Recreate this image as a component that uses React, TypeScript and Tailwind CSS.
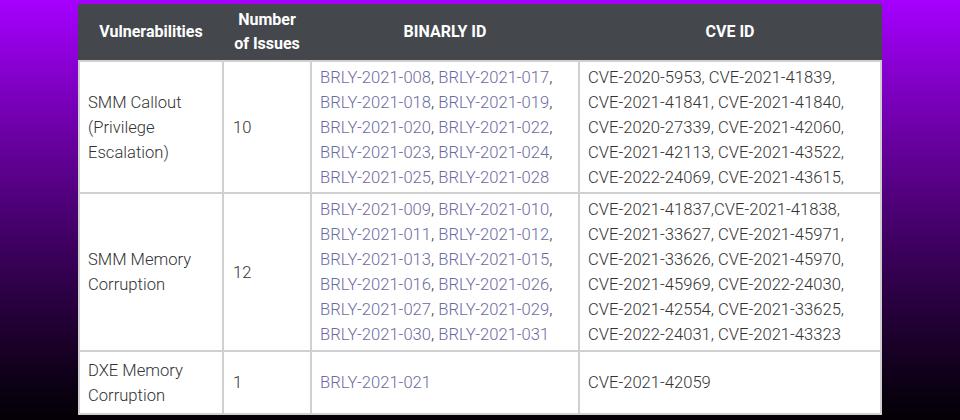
import React from 'react';

type Row = {
  name: string[];
  count: string;
  binarly: string[][];
  cve: string[];
};

const rows: Row[] = [
  {
    name: ['SMM Callout', '(Privilege', 'Escalation)'],
    count: '10',
    binarly: [
      ['BRLY-2021-008', 'BRLY-2021-017'],
      ['BRLY-2021-018', 'BRLY-2021-019'],
      ['BRLY-2021-020', 'BRLY-2021-022'],
      ['BRLY-2021-023', 'BRLY-2021-024'],
      ['BRLY-2021-025', 'BRLY-2021-028'],
    ],
    cve: [
      'CVE-2020-5953, CVE-2021-41839,',
      'CVE-2021-41841, CVE-2021-41840,',
      'CVE-2020-27339, CVE-2021-42060,',
      'CVE-2021-42113, CVE-2021-43522,',
      'CVE-2022-24069, CVE-2021-43615,',
    ],
  },
  {
    name: ['SMM Memory', 'Corruption'],
    count: '12',
    binarly: [
      ['BRLY-2021-009', 'BRLY-2021-010'],
      ['BRLY-2021-011', 'BRLY-2021-012'],
      ['BRLY-2021-013', 'BRLY-2021-015'],
      ['BRLY-2021-016', 'BRLY-2021-026'],
      ['BRLY-2021-027', 'BRLY-2021-029'],
      ['BRLY-2021-030', 'BRLY-2021-031'],
    ],
    cve: [
      'CVE-2021-41837,CVE-2021-41838,',
      'CVE-2021-33627, CVE-2021-45971,',
      'CVE-2021-33626, CVE-2021-45970,',
      'CVE-2021-45969, CVE-2022-24030,',
      'CVE-2021-42554, CVE-2021-33625,',
      'CVE-2022-24031, CVE-2021-43323',
    ],
  },
  {
    name: ['DXE Memory', 'Corruption'],
    count: '1',
    binarly: [['BRLY-2021-021']],
    cve: ['CVE-2021-42059'],
  },
];

const cols = 'grid-cols-[142px_86px_266px_300px]';

export default function App() {
  return (
    <div
      className="w-full h-[420px] bg-linear-to-b from-[#a600ff] to-[#040006] pt-1 overflow-hidden"
      style={{ fontFamily: 'Roboto, "Liberation Sans", sans-serif' }}
    >
      <div className="w-[804px] ml-[78px]">
        {/* Header */}
        <div className={`grid ${cols} gap-x-[2px] px-[2px] h-[56px] bg-[#44484d] text-white font-bold text-base leading-6`}>
          <div className="flex items-center justify-center text-center">Vulnerabilities</div>
          <div className="flex items-center justify-center text-center">
            Number
            <br />
            of Issues
          </div>
          <div className="flex items-center justify-center text-center">BINARLY ID</div>
          <div className="flex items-center justify-center text-center">CVE ID</div>
        </div>

        {/* Body */}
        <div
          className={`grid ${cols} grid-rows-[130px_156px_61px] gap-[2px] p-[2px] bg-[#d0d0d0] text-[16.6px] font-light leading-[25px] text-[#333333]`}
        >
          {rows.map((r, i) => (
            <React.Fragment key={i}>
              <div className="bg-white px-2 flex flex-col justify-center">
                {r.name.map((n) => (
                  <span key={n}>{n}</span>
                ))}
              </div>
              <div className="bg-white px-[9px] flex items-center">{r.count}</div>
              <div className="bg-white px-2 flex flex-col justify-center whitespace-nowrap">
                {r.binarly.map((pair, j) => (
                  <span key={j}>
                    {pair.map((id, k) => (
                      <React.Fragment key={id}>
                        {k > 0 && ', '}
                        <a className="text-[#6b6b9f]">{id}</a>
                      </React.Fragment>
                    ))}
                    {j < r.binarly.length - 1 && ','}
                  </span>
                ))}
              </div>
              <div className="bg-white px-2 flex flex-col justify-center whitespace-nowrap">
                {r.cve.map((c) => (
                  <span key={c}>{c}</span>
                ))}
              </div>
            </React.Fragment>
          ))}
        </div>
      </div>
    </div>
  );
}
